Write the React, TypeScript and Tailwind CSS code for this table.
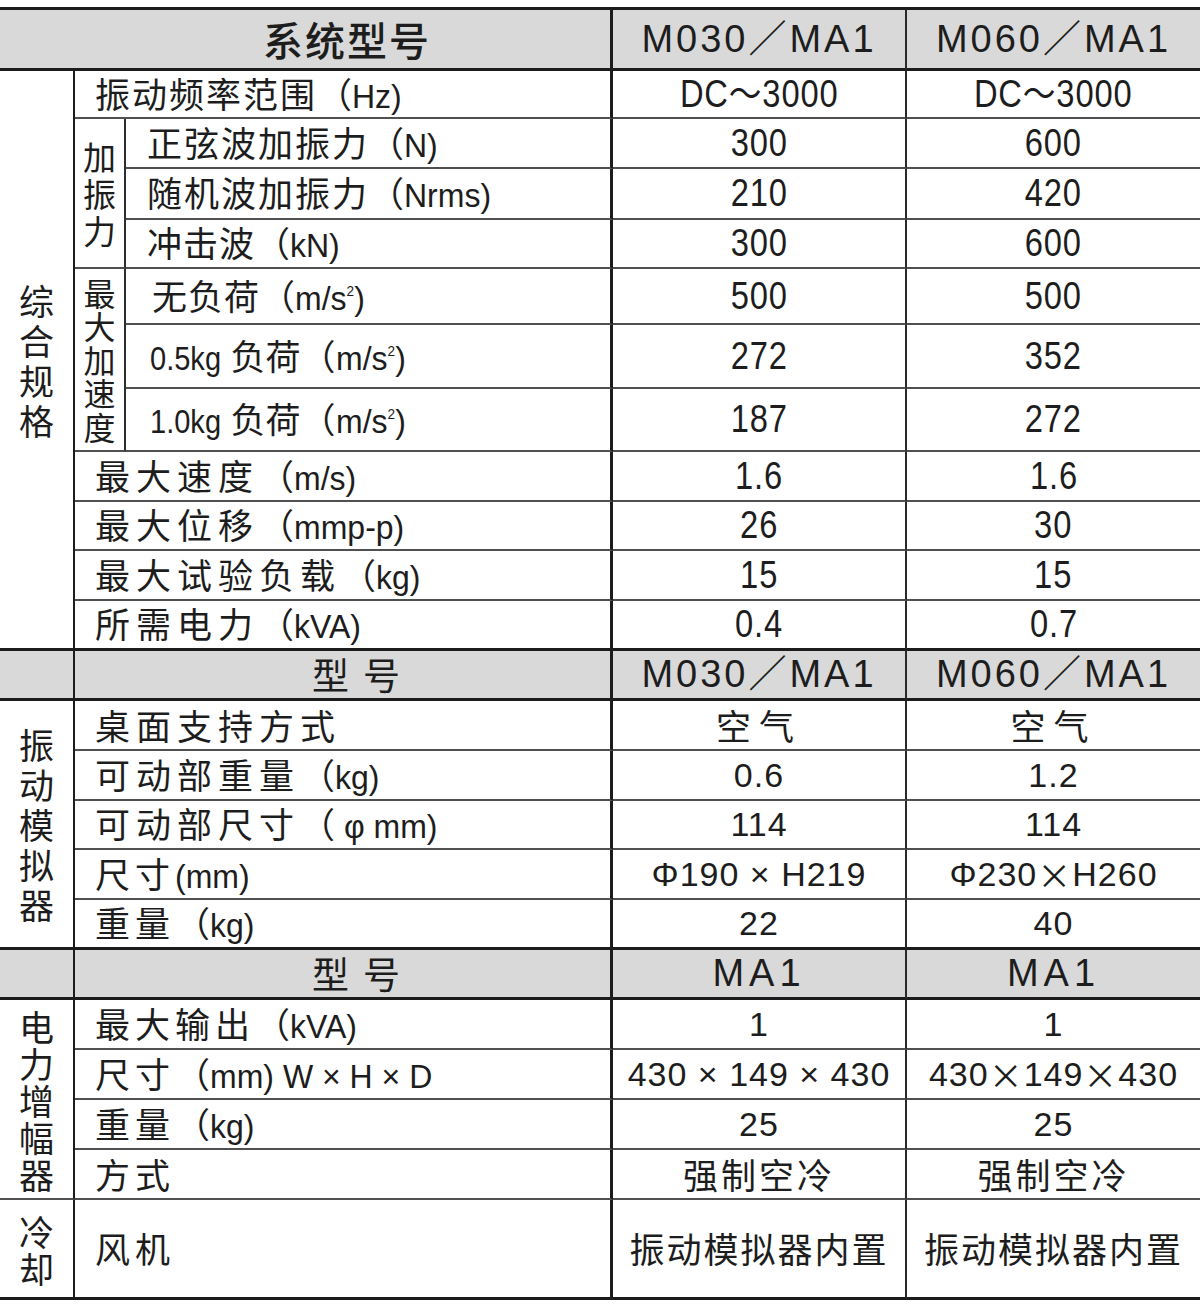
import type { ReactNode } from "react";

const LAT = "font-['Liberation_Sans','Noto_Sans_CJK_SC',sans-serif]";
const CJK = "font-['Noto_Sans_CJK_SC',sans-serif]";

// border helpers
const thin = "border-b-2 border-b-[#505050]";
const thick = "border-b-[3px] border-b-[#1c1c1c]";
const vFirst = "border-r-2 border-r-[#1c1c1c]";
const vSub = "border-r-2 border-r-[#2e2e2e]";
const vMain = "border-r-[3px] border-r-[#1c1c1c]";
const vVal = "border-r-2 border-r-[#2a2a2a]";
const gray = "bg-[#d9d9d9]";

function Vert({ text, className }: { text: string; className: string }) {
  return (
    <div className={`flex flex-col items-center justify-center ${CJK} ${className}`}>
      {text.split("").map((c, i) => (
        <span key={i}>{c}</span>
      ))}
    </div>
  );
}

// latin run inside a label
function C({ children }: { children: ReactNode }) {
  return <span className={`inline-block origin-left scale-x-[0.97] ${LAT} text-[33px]`}>{children}</span>;
}

// squeezed weight prefix ("0.5kg")
function K({ children }: { children: ReactNode }) {
  return (
    <span className={`mr-[-8px] inline-block origin-left scale-x-[0.88] ${LAT} text-[33px]`}>{children}</span>
  );
}

// condensed value
function N({ children }: { children: ReactNode }) {
  return <span className="inline-block scale-x-[0.86] whitespace-nowrap">{children}</span>;
}

function Sq() {
  return <sup className="top-[-14px] text-[14px]">2</sup>;
}

type Row = {
  label: ReactNode;
  a: ReactNode;
  b: ReactNode;
  sub?: boolean;
  pl?: string;
  bottom?: string;
};

function Label({ row }: { row: Row }) {
  const span = row.sub ? "" : "col-span-2";
  const pad = row.pl ?? (row.sub ? "pl-[21px]" : "pl-[20px]");
  return (
    <div className={`flex items-center ${span} ${pad} ${row.bottom ?? thin} ${vMain} ${CJK} text-[35px]`}>
      <span className="whitespace-nowrap">{row.label}</span>
    </div>
  );
}

function Vals({ row, font }: { row: Row; font: string }) {
  return (
    <>
      <div className={`flex items-center justify-center ${row.bottom ?? thin} ${vVal} ${font}`}>{row.a}</div>
      <div className={`flex items-center justify-center ${row.bottom ?? thin} ${font}`}>{row.b}</div>
    </>
  );
}

const upperNum = `${LAT} text-[38px] tracking-[1px]`;
const lowerNum = `${LAT} text-[34px] tracking-[1px]`;
const cjkVal = `${CJK} text-[35px]`;

export default function App() {
  return (
    <div className="min-h-[1308px] w-[1200px] bg-white pt-[7px] text-[#1d1d1d]">
      <div className="grid grid-cols-[75px_51px_487px_294px_293px] grid-rows-[61px_48px_50px_51px_49px_56px_64px_63px_50px_49px_50px_50px_50px_50px_50px_49px_50px_50px_50px_50px_50px_50px_50px_100px] border-t-[3px] border-t-[#1c1c1c]">
        {/* header */}
        <div className={`col-span-3 flex items-center justify-center pl-[84px] ${gray} ${thick} ${vMain} ${CJK} text-[40px] font-medium tracking-[2px]`}>
          系统型号
        </div>
        <div className={`flex items-center justify-center ${gray} ${thick} ${vVal} ${LAT} text-[38px] tracking-[3px]`}>
          M030／MA1
        </div>
        <div className={`flex items-center justify-center ${gray} ${thick} ${LAT} text-[38px] tracking-[3px]`}>
          M060／MA1
        </div>

        {/* 综合规格 */}
        <Vert text="综合规格" className={`row-span-11 ${thick} ${vFirst} text-[35px] leading-[40px]`} />
        <Label row={{ label: <><span className="tracking-[2px]">振动频率范围</span>（<C>Hz)</C></>, a: null, b: null }} />
        <Vals row={{ label: null, a: <N>DC～3000</N>, b: <N>DC～3000</N> }} font={upperNum} />

        <Vert text="加振力" className={`row-span-3 ${thin} ${vSub} text-[33px] leading-[37px]`} />
        <Label row={{ sub: true, label: <><span className="tracking-[2px]">正弦波加振力</span>（<C>N)</C></>, a: null, b: null }} />
        <Vals row={{ label: null, a: <N>300</N>, b: <N>600</N> }} font={upperNum} />
        <Label row={{ sub: true, label: <><span className="tracking-[2px]">随机波加振力</span>（<C>Nrms)</C></>, a: null, b: null }} />
        <Vals row={{ label: null, a: <N>210</N>, b: <N>420</N> }} font={upperNum} />
        <Label row={{ sub: true, label: <><span className="tracking-[1px]">冲击波</span>（<C>kN)</C></>, a: null, b: null }} />
        <Vals row={{ label: null, a: <N>300</N>, b: <N>600</N> }} font={upperNum} />

        <Vert text="最大加速度" className={`row-span-3 ${thin} ${vSub} text-[32px] leading-[33.4px]`} />
        <Label row={{ sub: true, pl: "pl-[26px]", label: <><span className="tracking-[1px]">无负荷</span>（<C>m/s<Sq />)</C></>, a: null, b: null }} />
        <Vals row={{ label: null, a: <N>500</N>, b: <N>500</N> }} font={upperNum} />
        <Label row={{ sub: true, pl: "pl-[24px]", label: <><K>0.5kg</K> 负荷（<C>m/s<Sq />)</C></>, a: null, b: null }} />
        <Vals row={{ label: null, a: <N>272</N>, b: <N>352</N> }} font={upperNum} />
        <Label row={{ sub: true, pl: "pl-[24px]", label: <><K>1.0kg</K> 负荷（<C>m/s<Sq />)</C></>, a: null, b: null }} />
        <Vals row={{ label: null, a: <N>187</N>, b: <N>272</N> }} font={upperNum} />

        <Label row={{ label: <><span className="tracking-[6px]">最大速度</span>（<C>m/s)</C></>, a: null, b: null }} />
        <Vals row={{ label: null, a: <N>1.6</N>, b: <N>1.6</N> }} font={upperNum} />
        <Label row={{ label: <><span className="tracking-[6px]">最大位移</span>（<C>mmp-p)</C></>, a: null, b: null }} />
        <Vals row={{ label: null, a: <N>26</N>, b: <N>30</N> }} font={upperNum} />
        <Label row={{ label: <><span className="tracking-[6px]">最大试验负载</span>（<C>kg)</C></>, a: null, b: null }} />
        <Vals row={{ label: null, a: <N>15</N>, b: <N>15</N> }} font={upperNum} />
        <Label row={{ bottom: thick, label: <><span className="tracking-[6px]">所需电力</span>（<C>kVA)</C></>, a: null, b: null }} />
        <Vals row={{ bottom: thick, label: null, a: <N>0.4</N>, b: <N>0.7</N> }} font={upperNum} />

        {/* 型号 — 振动模拟器 */}
        <div className={`${gray} ${thick} ${vFirst}`} />
        <div className={`col-span-2 flex items-center justify-center pl-[41px] ${gray} ${thick} ${vMain} ${CJK} text-[37px] tracking-[14px]`}>
          型号
        </div>
        <div className={`flex items-center justify-center ${gray} ${thick} ${vVal} ${LAT} text-[38px] tracking-[3px]`}>
          M030／MA1
        </div>
        <div className={`flex items-center justify-center ${gray} ${thick} ${LAT} text-[38px] tracking-[3px]`}>
          M060／MA1
        </div>

        <Vert text="振动模拟器" className={`row-span-5 ${thick} ${vFirst} text-[35px] leading-[40px]`} />
        <Label row={{ label: <span className="tracking-[6px]">桌面支持方式</span>, a: null, b: null }} />
        <Vals row={{ label: null, a: <span className="tracking-[8px]">空气</span>, b: <span className="tracking-[8px]">空气</span> }} font={cjkVal} />
        <Label row={{ label: <><span className="tracking-[6px]">可动部重量</span>（<C>kg)</C></>, a: null, b: null }} />
        <Vals row={{ label: null, a: "0.6", b: "1.2" }} font={lowerNum} />
        <Label row={{ label: <><span className="tracking-[6px]">可动部尺寸</span>（<C>&nbsp;φ mm)</C></>, a: null, b: null }} />
        <Vals row={{ label: null, a: "114", b: "114" }} font={lowerNum} />
        <Label row={{ label: <><span className="tracking-[5px]">尺寸</span><C>(mm)</C></>, a: null, b: null }} />
        <Vals
          row={{
            label: null,
            a: "Φ190 × H219",
            b: <>Φ230<span className={`${CJK} text-[34px]`}>×</span>H260</>,
          }}
          font={lowerNum}
        />
        <Label row={{ bottom: thick, label: <><span className="tracking-[5px]">重量</span>（<C>kg)</C></>, a: null, b: null }} />
        <Vals row={{ bottom: thick, label: null, a: "22", b: "40" }} font={lowerNum} />

        {/* 型号 — 电力增幅器 */}
        <div className={`${gray} ${thick} ${vFirst}`} />
        <div className={`col-span-2 flex items-center justify-center pl-[41px] ${gray} ${thick} ${vMain} ${CJK} text-[37px] tracking-[14px]`}>
          型号
        </div>
        <div className={`flex items-center justify-center ${gray} ${thick} ${vVal} ${LAT} text-[38px] tracking-[5px]`}>
          MA1
        </div>
        <div className={`flex items-center justify-center ${gray} ${thick} ${LAT} text-[38px] tracking-[5px]`}>
          MA1
        </div>

        <Vert text="电力增幅器" className={`row-span-4 ${thin} ${vFirst} text-[35px] leading-[37px]`} />
        <Label row={{ label: <><span className="tracking-[5px]">最大输出</span>（<C>kVA)</C></>, a: null, b: null }} />
        <Vals row={{ label: null, a: "1", b: "1" }} font={lowerNum} />
        <Label row={{ label: <><span className="tracking-[5px]">尺寸</span>（<C>mm) W × H × D</C></>, a: null, b: null }} />
        <Vals
          row={{
            label: null,
            a: "430 × 149 × 430",
            b: <>430<span className={`${CJK} text-[34px]`}>×</span>149<span className={`${CJK} text-[34px]`}>×</span>430</>,
          }}
          font={lowerNum}
        />
        <Label row={{ label: <><span className="tracking-[5px]">重量</span>（<C>kg)</C></>, a: null, b: null }} />
        <Vals row={{ label: null, a: "25", b: "25" }} font={lowerNum} />
        <Label row={{ label: <span className="tracking-[5px]">方式</span>, a: null, b: null }} />
        <Vals row={{ label: null, a: <span className="tracking-[3px]">强制空冷</span>, b: <span className="tracking-[3px]">强制空冷</span> }} font={cjkVal} />

        {/* 冷却 */}
        <Vert text="冷却" className={`${thick} ${vFirst} text-[35px] leading-[37px]`} />
        <Label row={{ bottom: thick, label: <span className="tracking-[5px]">风机</span>, a: null, b: null }} />
        <Vals
          row={{
            bottom: thick,
            label: null,
            a: <span className="tracking-[2px]">振动模拟器内置</span>,
            b: <span className="tracking-[2px]">振动模拟器内置</span>,
          }}
          font={cjkVal}
        />
      </div>
    </div>
  );
}
